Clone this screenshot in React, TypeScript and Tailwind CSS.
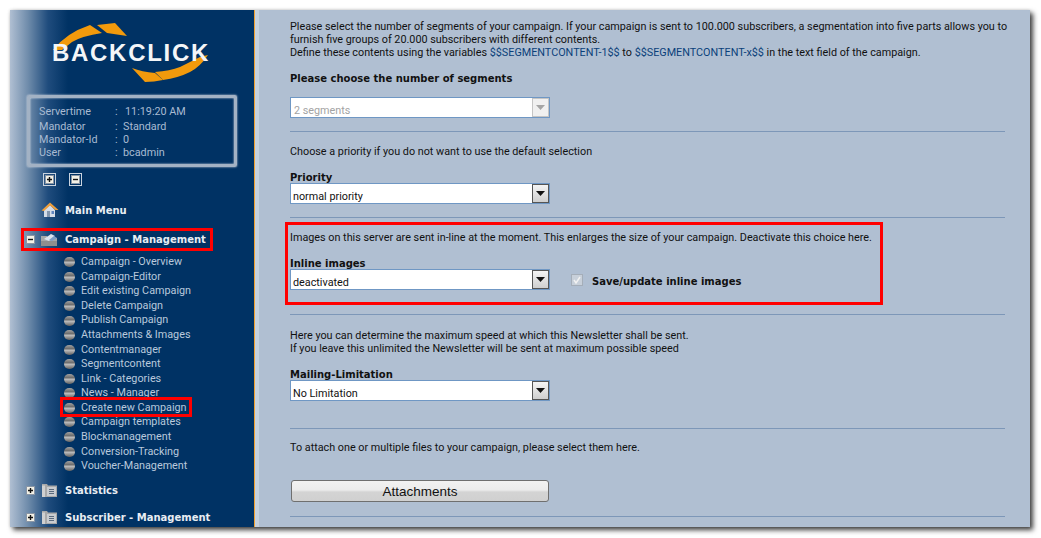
const font = "font-['Roboto',sans-serif]";
const boldFont = "font-['DejaVu_Sans',sans-serif] text-[10px] font-bold";

const subItems = [
  "Campaign - Overview",
  "Campaign-Editor",
  "Edit existing Campaign",
  "Delete Campaign",
  "Publish Campaign",
  "Attachments & Images",
  "Contentmanager",
  "Segmentcontent",
  "Link - Categories",
  "News - Manager",
  "Create new Campaign",
  "Campaign templates",
  "Blockmanagement",
  "Conversion-Tracking",
  "Voucher-Management",
];

const serverInfo = [
  { label: "Servertime", value: "11:19:20 AM", h: "h-[16px] mb-[1px]", ml: "ml-[2px]" },
  { label: "Mandator", value: "Standard", h: "h-[13px]", ml: "" },
  { label: "Mandator-Id", value: "0", h: "h-[13px]", ml: "" },
  { label: "User", value: "bcadmin", h: "h-[13px]", ml: "" },
];

const Logo = () => (
  <div className="relative ml-[40px] h-[72px] w-[170px]">
    <svg width="170" height="72" viewBox="0 0 170 72" className="absolute left-0 top-0">
      <path d="M3 27 Q16 10 40 2 L52 10 Q32 13 22 19 L12 27 Z" fill="#f29a0c" />
      <path d="M47 2 L65 0 L77 13 L57 10 Z" fill="#f29a0c" />
      <path d="M158 32 Q150 44 140 49 Q128 55 113 57 L105 49 Q120 48 130 44 L150 34 Z" fill="#f29a0c" />
      <path d="M82 45 Q92 49 105 50 L113 57 Q104 59 95 59 Z" fill="#f29a0c" />
    </svg>
    <span className="absolute left-[2px] top-[15px] font-['Liberation_Sans',sans-serif] text-[24px] leading-[30px] font-bold tracking-[1.7px] text-[#f4f6f8]">
      BACKCLICK
    </span>
  </div>
);

const Expander = ({ open }: { open: boolean }) => (
  <span className="flex h-[9px] w-[9px] shrink-0 items-center justify-center border border-[#8a96a5] bg-[#f3f1e6]">
    <svg width="7" height="7" viewBox="0 0 7 7">
      <path d={open ? "M1 3.5H6" : "M1 3.5H6M3.5 1V6"} stroke="#111" strokeWidth="1.4" />
    </svg>
  </span>
);

const House = () => (
  <svg width="18" height="18" viewBox="0 0 18 18">
    <path d="M3 9 V16 H14 V9 L9 4 Z" fill="#d5dde8" />
    <rect x="6" y="10" width="3" height="6" fill="#8497ae" />
    <rect x="10.5" y="10" width="2.5" height="3" fill="#5f85bf" />
    <path d="M0.5 9.5 L9 1.5 L17.5 9 L14.5 9 L9 4.5 L3 10 Z" fill="#ee9f3c" />
  </svg>
);

const OpenFolder = () => (
  <svg width="18" height="14" viewBox="0 0 18 14">
    <path d="M1 3 H7 L8 5 H17 V13 H1 Z" fill="#a8a8a8" />
    <path d="M4 6 L11 1 L15 3 L9 8 Z" fill="#dce4ee" />
    <path d="M9 7 L14 3 L17 5 L12 8 Z" fill="#7d9dc7" />
    <rect x="1" y="8" width="16" height="5" fill="#8e8e8e" />
  </svg>
);

const ClosedFolder = () => (
  <svg width="17" height="16" viewBox="0 0 17 16">
    <path d="M1 2 H6 L7 3.5 H16 V15 H1 Z" fill="#a9a9a9" />
    <rect x="1" y="3.5" width="3" height="11.5" fill="#d0d0d0" />
    <rect x="6" y="5" width="9" height="9" fill="#c9ccd0" />
    <path d="M8 7.5H13M8 9.5H13M8 11.5H13" stroke="#5a6a7d" strokeWidth="1" />
  </svg>
);

const Sidebar = () => (
  <aside className={`${font} flex h-full w-[244px] shrink-0 flex-col bg-[linear-gradient(90deg,#b0bfd2_0px,#6f8cab_18px,#1f4c7d_38px,#003264_58px)] pt-[13px]`}>
    <Logo />
    <div className="ml-[17px] flex h-[72px] w-[210px] flex-col rounded-[2px] border-[3px] border-[#a3b2c4] px-[9px] pt-[6px] text-[10.8px] text-[#a9bbd2] shadow-[0_0_2px_#dfe5ec,inset_0_0_2px_#e7ecf2]">
      {serverInfo.map((row) => (
        <div key={row.label} className={`flex items-center ${row.h}`}>
          <span className="w-[76px]">{row.label}</span>
          <span className="w-[8px]">:</span>
          <span className={row.ml}>{row.value}</span>
        </div>
      ))}
    </div>
    <div className="ml-[33px] mt-[6px] flex gap-[13px]">
      {[false, true].map((open) => (
        <span key={String(open)} className="flex h-[13px] w-[13px] items-center justify-center border border-[#c9d3df]">
          <Expander open={open} />
        </span>
      ))}
    </div>
    <div className="ml-[31px] mt-[14px] flex h-[20px] items-center gap-[6px]">
      <House />
      <span className={`${boldFont} text-[#e8edf3]`}>Main Menu</span>
    </div>
    <div className="ml-[11px] mt-[8px] flex h-[23px] w-[192px] items-center border-[3px] border-[#f00] pl-[2px]">
      <Expander open />
      <span className="ml-[5px]"><OpenFolder /></span>
      <span className={`${boldFont} ml-[7px] whitespace-nowrap text-[#e8edf3]`}>Campaign - Management</span>
    </div>
    <ul className="mb-[-1px] ml-[50px] mt-[4px] flex flex-col text-[10.8px] text-[#b9c9dc]">
      {subItems.map((item) => (
        <li key={item} className="relative flex h-[14.57px] items-center gap-[6px]">
          {item === "Create new Campaign" && (
            <span className="absolute left-[0px] top-[-4px] h-[20px] w-[132px] border-[3px] border-[#f00]" />
          )}
          <span className="ml-[4px] h-[10px] w-[11px] shrink-0 rounded-full bg-[linear-gradient(#a0a0a0,#707070_35%,#b8b8b8_55%,#5f5f5f)]" />
          <span className="whitespace-nowrap">{item}</span>
        </li>
      ))}
    </ul>
    {["Statistics", "Subscriber - Management"].map((label) => (
      <div key={label} className="ml-[16px] mt-[9px] flex h-[18px] items-center">
        <Expander open={false} />
        <span className="ml-[6px]"><ClosedFolder /></span>
        <span className={`${boldFont} ml-[7px] whitespace-nowrap text-[#e8edf3]`}>{label}</span>
      </div>
    ))}
  </aside>
);

const Select = ({ value, disabled }: { value: string; disabled?: boolean }) => (
  <div className="flex h-[21px] w-[260px] items-center justify-between border border-[#6f97c4] bg-white pl-[2px]">
    <span className={`pt-[5px] text-[10.8px] ${disabled ? "pl-[1px] text-[#a3a3a3]" : "text-[#111]"}`}>{value}</span>
    <span className={`flex h-[19px] w-[17px] items-center justify-center border ${disabled ? "border-[#c5c5c5] bg-[#f0f0f0]" : "border-[#555] bg-[linear-gradient(#f4f4f4,#cfcfcf)]"}`}>
      <svg width="9" height="5" viewBox="0 0 9 5">
        <path d="M0 0H9L4.5 5Z" fill={disabled ? "#a5a5a5" : "#111"} />
      </svg>
    </span>
  </div>
);

const Divider = ({ className }: { className: string }) => (
  <hr className={`w-[715px] border-0 border-t border-[#7d97b8] ${className}`} />
);

const Heading = ({ children, className }: { children: string; className: string }) => (
  <h3 className={`${boldFont} h-[12px] leading-[13px] text-[#111] ${className}`}>
    {children}
  </h3>
);

const Content = () => (
  <main className={`${font} h-full flex-1 bg-[#b0bfd2] pl-[31px] pt-[10px] text-[10.8px] leading-[13px] text-[#111]`}>
    <p className="whitespace-nowrap">
      Please select the number of segments of your campaign. If your campaign is sent to 100.000 subscribers, a segmentation into five parts allows you to
      <br />
      furnish five groups of 20.000 subscribers with different contents.
      <br />
      Define these contents using the variables <span className="text-[#0b3f7a]">$$SEGMENTCONTENT-1$$</span> to <span className="text-[#0b3f7a]">$$SEGMENTCONTENT-x$$</span> in the text field of the campaign.
    </p>
    <Heading className="mt-[13px]">Please choose the number of segments</Heading>
    <div className="mt-[13px]"><Select value="2 segments" disabled /></div>
    <Divider className="mt-[13px]" />
    <p className="mt-[13px]">Choose a priority if you do not want to use the default selection</p>
    <Heading className="mt-[13px]">Priority</Heading>
    <Select value="normal priority" />
    <Divider className="mt-[13px]" />
    <section className="ml-[-5px] mt-[4px] h-[83px] w-[598px] border-[3px] border-[#f00] pl-[2px] pt-[6px]">
      <p className="whitespace-nowrap">Images on this server are sent in-line at the moment. This enlarges the size of your campaign. Deactivate this choice here.</p>
      <Heading className="mt-[13px]">Inline images</Heading>
      <div className="flex items-center">
        <Select value="deactivated" />
        <span className="ml-[21px] flex h-[12px] w-[12px] items-center justify-center border border-[#a5aeb9] bg-[#c8d0da]">
          <svg width="10" height="10" viewBox="0 0 10 10">
            <path d="M2 5 L4 8 L8 2" fill="none" stroke="#f2f2f2" strokeWidth="1.5" />
          </svg>
        </span>
        <span className={`${boldFont} ml-[9px] pt-[3px]`}>Save/update inline images</span>
      </div>
    </section>
    <Divider className="mt-[9px]" />
    <p className="mt-[14px]">
      Here you can determine the maximum speed at which this Newsletter shall be sent.
      <br />
      If you leave this unlimited the Newsletter will be sent at maximum possible speed
    </p>
    <Heading className="mt-[13px]">Mailing-Limitation</Heading>
    <Select value="No Limitation" />
    <Divider className="mt-[27px]" />
    <p className="mt-[12px]">To attach one or multiple files to your campaign, please select them here.</p>
    <button className="ml-[1px] mt-[26px] block h-[22px] w-[258px] rounded-[3px] border border-[#6f6f6f] bg-[linear-gradient(#f2f2f2_0%,#ececec_45%,#d4d4d4_55%,#d0d0d0_100%)] font-['Liberation_Sans',sans-serif] text-[13.5px] text-[#111]">
      Attachments
    </button>
    <Divider className="mt-[14px]" />
  </main>
);

export default function App() {
  return (
    <div className="h-[538px] w-[1041px] overflow-hidden bg-white pl-[10px] pt-[10px]">
      <div className="flex h-[517px] w-[1020px] overflow-hidden shadow-[0_0_3px_rgba(0,0,0,0.15),3px_3px_5px_rgba(0,0,0,0.75)]">
        <Sidebar />
        <div className="w-[1px] shrink-0 bg-[#f0a030]" />
        <div className="w-[4px] shrink-0 bg-[#c6d1dd]" />
        <Content />
      </div>
    </div>
  );
}
